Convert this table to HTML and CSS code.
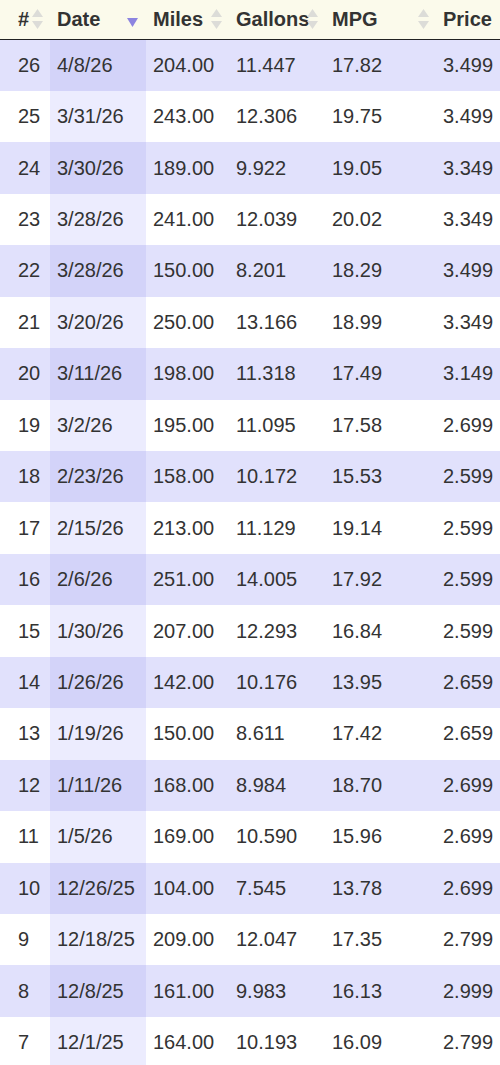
FILE: index.html
```html
<!DOCTYPE html>
<html>
<head>
<meta charset="utf-8">
<link rel="stylesheet" href="styles.css">
</head>
<body>
<table class="log">
  <colgroup>
    <col class="c-num"><col class="c-date"><col class="c-miles"><col class="c-gal"><col class="c-mpg"><col class="c-price">
  </colgroup>
  <thead>
    <tr>
      <th class="num">#<svg class="sort" viewBox="0 0 11 20"><path d="M5.5 0 L11 8 H0 Z M0 12 H11 L5.5 20 Z"/></svg></th>
      <th>Date<svg class="sort desc" viewBox="0 0 11 9"><path d="M0 0 H11 L5.5 9 Z"/></svg></th>
      <th>Miles<svg class="sort" viewBox="0 0 11 20"><path d="M5.5 0 L11 8 H0 Z M0 12 H11 L5.5 20 Z"/></svg></th>
      <th>Gallons<svg class="sort" viewBox="0 0 11 20"><path d="M5.5 0 L11 8 H0 Z M0 12 H11 L5.5 20 Z"/></svg></th>
      <th>MPG<svg class="sort" viewBox="0 0 11 20"><path d="M5.5 0 L11 8 H0 Z M0 12 H11 L5.5 20 Z"/></svg></th>
      <th class="price">Price</th>
    </tr>
  </thead>
  <tbody>
    <tr><td class="num">26</td><td class="date">4/8/26</td><td>204.00</td><td>11.447</td><td>17.82</td><td class="price">3.499</td></tr>
    <tr><td class="num">25</td><td class="date">3/31/26</td><td>243.00</td><td>12.306</td><td>19.75</td><td class="price">3.499</td></tr>
    <tr><td class="num">24</td><td class="date">3/30/26</td><td>189.00</td><td>9.922</td><td>19.05</td><td class="price">3.349</td></tr>
    <tr><td class="num">23</td><td class="date">3/28/26</td><td>241.00</td><td>12.039</td><td>20.02</td><td class="price">3.349</td></tr>
    <tr><td class="num">22</td><td class="date">3/28/26</td><td>150.00</td><td>8.201</td><td>18.29</td><td class="price">3.499</td></tr>
    <tr><td class="num">21</td><td class="date">3/20/26</td><td>250.00</td><td>13.166</td><td>18.99</td><td class="price">3.349</td></tr>
    <tr><td class="num">20</td><td class="date">3/11/26</td><td>198.00</td><td>11.318</td><td>17.49</td><td class="price">3.149</td></tr>
    <tr><td class="num">19</td><td class="date">3/2/26</td><td>195.00</td><td>11.095</td><td>17.58</td><td class="price">2.699</td></tr>
    <tr><td class="num">18</td><td class="date">2/23/26</td><td>158.00</td><td>10.172</td><td>15.53</td><td class="price">2.599</td></tr>
    <tr><td class="num">17</td><td class="date">2/15/26</td><td>213.00</td><td>11.129</td><td>19.14</td><td class="price">2.599</td></tr>
    <tr><td class="num">16</td><td class="date">2/6/26</td><td>251.00</td><td>14.005</td><td>17.92</td><td class="price">2.599</td></tr>
    <tr><td class="num">15</td><td class="date">1/30/26</td><td>207.00</td><td>12.293</td><td>16.84</td><td class="price">2.599</td></tr>
    <tr><td class="num">14</td><td class="date">1/26/26</td><td>142.00</td><td>10.176</td><td>13.95</td><td class="price">2.659</td></tr>
    <tr><td class="num">13</td><td class="date">1/19/26</td><td>150.00</td><td>8.611</td><td>17.42</td><td class="price">2.659</td></tr>
    <tr><td class="num">12</td><td class="date">1/11/26</td><td>168.00</td><td>8.984</td><td>18.70</td><td class="price">2.699</td></tr>
    <tr><td class="num">11</td><td class="date">1/5/26</td><td>169.00</td><td>10.590</td><td>15.96</td><td class="price">2.699</td></tr>
    <tr><td class="num">10</td><td class="date">12/26/25</td><td>104.00</td><td>7.545</td><td>13.78</td><td class="price">2.699</td></tr>
    <tr><td class="num">9</td><td class="date">12/18/25</td><td>209.00</td><td>12.047</td><td>17.35</td><td class="price">2.799</td></tr>
    <tr><td class="num">8</td><td class="date">12/8/25</td><td>161.00</td><td>9.983</td><td>16.13</td><td class="price">2.999</td></tr>
    <tr><td class="num">7</td><td class="date">12/1/25</td><td>164.00</td><td>10.193</td><td>16.09</td><td class="price">2.799</td></tr>
  </tbody>
</table>
</body>
</html>
```

FILE: styles.css
```css
html, body {
  margin: 0;
  padding: 0;
  background: #ffffff;
}

.log {
  width: 500px;
  border-collapse: collapse;
  table-layout: fixed;
  font-family: "Liberation Sans", Arial, sans-serif;
  font-size: 20px;
  color: #333333;
}

.c-num { width: 50px; }
.c-date { width: 96px; }
.c-miles { width: 83px; }
.c-gal { width: 96px; }
.c-mpg { width: 111px; }
.c-price { width: 64px; }

.log thead th {
  position: relative;
  height: 39px;
  padding: 0 7px;
  background: #fbfaeb;
  border-bottom: 1px solid #222222;
  text-align: left;
  font-weight: bold;
  white-space: nowrap;
  box-sizing: border-box;
}

.log thead th.num {
  padding-left: 18px;
}

.log thead th.price {
  text-align: right;
  padding-right: 9px;
}

.sort {
  position: absolute;
  right: 7px;
  top: 9px;
  width: 11px;
  height: 20px;
  fill: #dcdcd8;
}

.sort.desc {
  top: 18px;
  right: 8px;
  width: 11px;
  height: 9px;
  fill: #8c84e0;
}

.log tbody td {
  height: 51.45px;
  padding: 0 7px;
  text-align: left;
  white-space: nowrap;
}

.log tbody tr:nth-child(odd) td {
  background: #e1e1fc;
}

.log tbody tr:nth-child(even) td {
  background: #ffffff;
}

.log tbody tr:nth-child(odd) td.date {
  background: #d3d3f9;
}

.log tbody tr:nth-child(even) td.date {
  background: #ececfe;
}

.log td.num {
  padding-left: 18px;
  padding-right: 0;
}

.log td.price {
  text-align: right;
  padding-right: 9px;
}
```
